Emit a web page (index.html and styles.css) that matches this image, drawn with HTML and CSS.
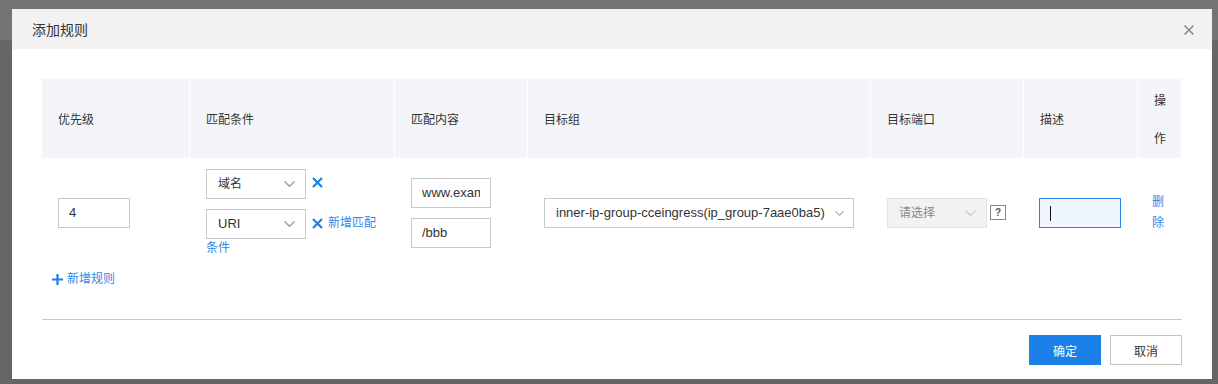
FILE: index.html
```html
<!DOCTYPE html>
<html lang="zh-CN">
<head>
<meta charset="utf-8">
<title>添加规则</title>
<link rel="stylesheet" href="styles.css">
</head>
<body>
<div class="modal">
  <div class="modal-header">
    <span class="modal-title">添加规则</span>
    <svg class="close" width="10" height="10" viewBox="0 0 10 10"><path d="M0.5 0.5L9.5 9.5M9.5 0.5L0.5 9.5" stroke="#888" stroke-width="1.5" fill="none"/></svg>
  </div>
  <div class="modal-body">
    <table class="rules">
      <colgroup>
        <col style="width:147px"><col style="width:205px"><col style="width:133px"><col style="width:343px"><col style="width:153px"><col style="width:114px"><col style="width:44px">
      </colgroup>
      <thead>
        <tr>
          <th>优先级</th><th>匹配条件</th><th>匹配内容</th><th>目标组</th><th>目标端口</th><th>描述</th><th>操作</th>
        </tr>
      </thead>
      <tbody>
        <tr>
          <td><div class="field w72 latin"><span class="val">4</span></div></td>
          <td>
            <div class="cond"><div class="select w100"><span>域名</span><svg class="chev" width="11" height="6" viewBox="0 0 11 6"><path d="M0.5 0.5L5.5 5.3L10.5 0.5" stroke="#999" stroke-width="1.3" fill="none"/></svg></div><svg class="xicon" width="11" height="11" viewBox="0 0 11 11"><path d="M1 1L10 10M10 1L1 10" stroke="#1a7fe6" stroke-width="2.2" fill="none"/></svg></div>
            <div class="cond last"><div class="select w100"><span class="latin">URI</span><svg class="chev" width="11" height="6" viewBox="0 0 11 6"><path d="M0.5 0.5L5.5 5.3L10.5 0.5" stroke="#999" stroke-width="1.3" fill="none"/></svg></div><svg class="xicon" width="11" height="11" viewBox="0 0 11 11"><path d="M1 1L10 10M10 1L1 10" stroke="#1a7fe6" stroke-width="2.2" fill="none"/></svg><a class="link add-cond">新增匹配条件</a></div>
          </td>
          <td>
            <div class="field w80 latin stack"><span class="val">www.example.com</span></div>
            <div class="field w80 latin"><span class="val">/bbb</span></div>
          </td>
          <td>
            <div class="select w310"><span class="latin">inner-ip-group-cceingress(ip_group-7aae0ba5)</span><svg class="chev" width="9" height="5" viewBox="0 0 9 5"><path d="M0.5 0.5L4.5 4.3L8.5 0.5" stroke="#aaa" stroke-width="1.1" fill="none"/></svg></div>
          </td>
          <td>
            <div class="select w100 disabled"><span>请选择</span><svg class="chev" width="11" height="6" viewBox="0 0 11 6"><path d="M0.5 0.5L5.5 5.3L10.5 0.5" stroke="#ccc" stroke-width="1.3" fill="none"/></svg></div><span class="qmark">?</span>
          </td>
          <td class="desc-cell"><div class="field w82 focused"><span class="caret"></span></div></td>
          <td class="op-cell"><a class="link del">删除</a></td>
        </tr>
      </tbody>
    </table>
    <div class="add-rule"><svg width="11" height="11" viewBox="0 0 11 11"><path d="M5.5 0V11M0 5.5H11" stroke="#1a7fe6" stroke-width="2.2" fill="none"/></svg><a class="link">新增规则</a></div>
    <div class="divider"></div>
  </div>
  <div class="modal-footer">
    <button class="btn primary">确定</button>
    <button class="btn">取消</button>
  </div>
</div>
</body>
</html>
```

FILE: styles.css
```css
* { box-sizing: border-box; }
html, body { margin: 0; padding: 0; }
body {
  width: 1218px;
  height: 384px;
  overflow: hidden;
  background: linear-gradient(to bottom, #747474 0, #747474 40px, #666666 40px, #666666 100%);
  font-family: "Liberation Sans", "Noto Sans CJK SC", sans-serif;
  font-size: 12px;
  color: #333;
  padding-top: 9px;
  padding-left: 12px;
}
.modal {
  width: 1200px;
  height: 370px;
  background: #fff;
}
.modal-header {
  height: 40px;
  background: #f2f2f2;
  display: flex;
  align-items: center;
  justify-content: space-between;
  padding: 0 18px 0 20px;
}
.modal-title {
  font-family: "Noto Sans CJK SC", sans-serif;
  font-size: 14px;
  color: #333;
}
.close { display: block; margin-top: 1px; }
.modal-body {
  padding: 30px 30px 0 30px;
}
.rules {
  width: 1139px;
  table-layout: fixed;
  border-collapse: separate;
  border-spacing: 0;
}
.rules th {
  background: #f4f5f9;
  font-weight: normal;
  text-align: left;
  color: #333;
  font-size: 12px;
  font-family: "Noto Sans CJK SC", sans-serif;
  height: 79px;
  line-height: 38px;
  padding: 0 16px;
  vertical-align: middle;
}
.rules th + th { border-left: 1px solid #fff; }
.rules td {
  padding: 11px 16px 10px 16px;
  vertical-align: middle;
  line-height: 18px;
}
.rules td + td { border-left: 1px solid transparent; }
.rules td.desc-cell { padding-left: 15px; }
.rules td.op-cell { padding-left: 14px; padding-right: 14px; }
.latin { font-family: "Liberation Sans", sans-serif; font-size: 13px; }
.field {
  height: 30px;
  border: 1px solid #c8c8c8;
  padding: 0 10px;
  line-height: 28px;
  background: #fff;
}
.field .val {
  display: block;
  white-space: nowrap;
  overflow: hidden;
}
.field.stack { margin-bottom: 10px; }
.w72 { width: 72px; }
.w80 { width: 80px; }
.w82 { width: 82px; }
.w100 { width: 100px; }
.w310 { width: 310px; }
.select {
  display: inline-flex;
  align-items: center;
  justify-content: space-between;
  height: 30px;
  border: 1px solid #c8c8c8;
  padding: 0 10px 0 11px;
  vertical-align: middle;
  background: #fff;
  white-space: nowrap;
}
.select span { line-height: 28px; }
.select.w310 { padding: 0 9px 0 11px; }
.select.disabled {
  background: #f2f2f2;
  border-color: #e3e3e3;
  color: #888;
}
.cond { line-height: 18px; }
.cond:first-child { margin-bottom: 10px; }
.xicon { vertical-align: middle; margin-left: 6px; position: relative; top: -2px; }
.cond.last .xicon { top: -1px; }
.link { color: #2f88e8; cursor: pointer; }
.add-cond { margin-left: 5px; }
.qmark {
  display: inline-block;
  vertical-align: middle;
  width: 16px;
  height: 15px;
  margin-left: 3px;
  border: 1px solid #888;
  font-size: 10px;
  line-height: 13px;
  text-align: center;
  color: #555;
  font-family: "Liberation Sans", sans-serif;
  font-weight: bold;
  position: relative;
  top: -1px;
}
.focused {
  border-color: #2a83e8;
  background: #f0f6fd;
  display: flex;
  align-items: center;
}
.caret {
  display: block;
  width: 1px;
  height: 15px;
  background: #111;
}
.del { display: block; line-height: 21px; }
.add-rule {
  margin-top: 3px;
  padding-left: 10px;
  line-height: 18px;
  display: flex;
  align-items: center;
  gap: 4px;
}
.divider {
  height: 1px;
  background: #c9c9c9;
  margin-top: 31px;
}
.modal-footer {
  display: flex;
  justify-content: flex-end;
  gap: 9px;
  padding: 15px 30px 0 30px;
}
.btn {
  width: 72px;
  height: 30px;
  border: 1px solid #c4c4c4;
  background: #fff;
  color: #333;
  font-family: "Noto Sans CJK SC", sans-serif;
  font-size: 12px;
  padding: 0;
  cursor: pointer;
}
.btn.primary {
  background: #1b81e8;
  border-color: #1b81e8;
  color: #fff;
}
```
